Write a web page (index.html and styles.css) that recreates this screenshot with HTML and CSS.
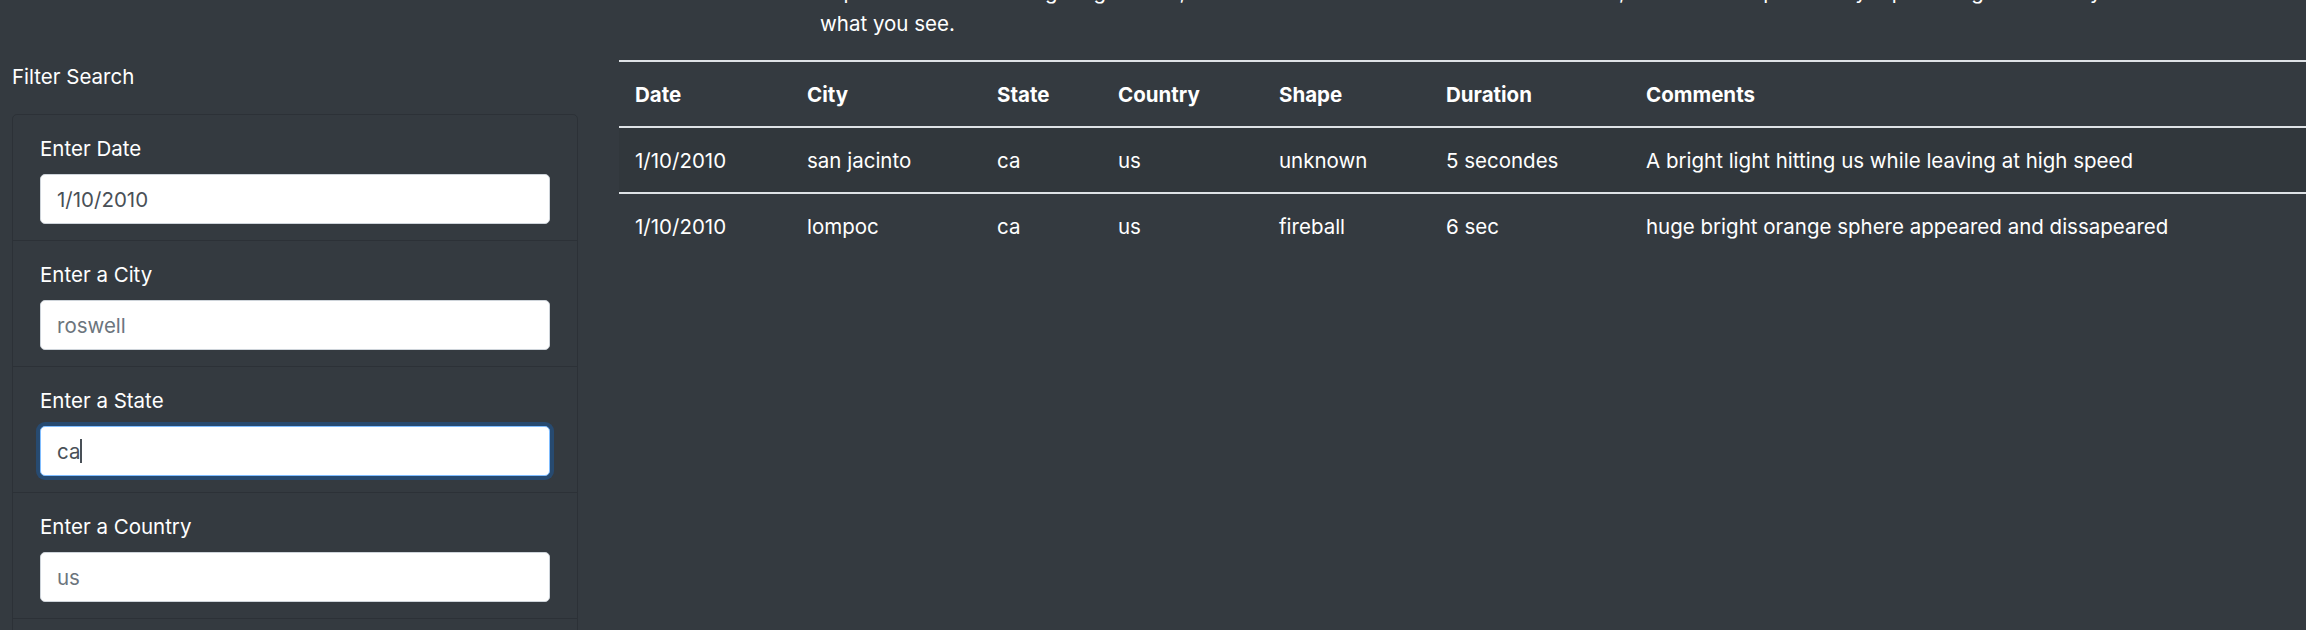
FILE: index.html
```html
<!DOCTYPE html>
<html lang="en">
<head>
<meta charset="utf-8">
<title>UFO Sightings</title>
<link rel="stylesheet" href="styles.css">
</head>
<body>
<div class="page">
  <aside class="sidebar">
    <div class="filter-title">Filter Search</div>
    <ul class="filter-card">
      <li class="filter-item">
        <label class="filter-label" for="datetime">Enter Date</label>
        <div class="input-wrap"><input class="filter-input" id="datetime" type="text" value="1/10/2010" placeholder="1/10/2010"></div>
      </li>
      <li class="filter-item">
        <label class="filter-label" for="city">Enter a City</label>
        <div class="input-wrap"><input class="filter-input" id="city" type="text" placeholder="roswell"></div>
      </li>
      <li class="filter-item">
        <label class="filter-label" for="state">Enter a State</label>
        <div class="input-wrap"><input class="filter-input is-focused" id="state" type="text" value="ca" placeholder="ca"><span class="caret">ca</span></div>
      </li>
      <li class="filter-item">
        <label class="filter-label" for="country">Enter a Country</label>
        <div class="input-wrap"><input class="filter-input" id="country" type="text" placeholder="us"></div>
      </li>
      <li class="filter-item filter-item-more"></li>
    </ul>
  </aside>
  <main class="content">
    <p class="intro">Explore the collected sightings below, narrow them down with the filters on the left, and then compare every reported light in the sky with<br>what you see.</p>
    <table class="sightings">
      <colgroup>
        <col class="c-date"><col class="c-city"><col class="c-state"><col class="c-country"><col class="c-shape"><col class="c-duration"><col class="c-comments">
      </colgroup>
      <thead>
        <tr><th>Date</th><th>City</th><th>State</th><th>Country</th><th>Shape</th><th>Duration</th><th>Comments</th></tr>
      </thead>
      <tbody>
        <tr><td>1/10/2010</td><td>san jacinto</td><td>ca</td><td>us</td><td>unknown</td><td>5 secondes</td><td>A bright light hitting us while leaving at high speed</td></tr>
        <tr><td>1/10/2010</td><td>lompoc</td><td>ca</td><td>us</td><td>fireball</td><td>6 sec</td><td>huge bright orange sphere appeared and dissapeared</td></tr>
      </tbody>
    </table>
  </main>
</div>
</body>
</html>
```

FILE: styles.css
```css
* { box-sizing: border-box; }

html, body {
  margin: 0;
  height: 100%;
  overflow: hidden;
}

body {
  background: #343a40;
  color: #fff;
  font-family: Inter, "Liberation Sans", Arial, sans-serif;
  font-size: 20.5px;
  line-height: 32px;
}

.page {
  display: flex;
  align-items: flex-start;
}

.sidebar {
  width: 566px;
  margin-left: 12px;
  flex: none;
  padding-top: 61px;
}

.filter-title {
  height: 32px;
  line-height: 32px;
}

.filter-card {
  list-style: none;
  margin: 21px 0 0 0;
  padding: 0;
  border: 1px solid rgba(0, 0, 0, 0.14);
  border-radius: 5px;
}

.filter-item {
  padding: 17px 27px 16px 27px;
  border-top: 1px solid rgba(0, 0, 0, 0.14);
}

.filter-item:first-child {
  border-top: none;
}

.filter-item-more {
  height: 125px;
}

.filter-label {
  display: block;
  height: 32px;
  line-height: 33px;
  margin-bottom: 10px;
}

.input-wrap {
  position: relative;
}

.filter-input {
  display: block;
  width: 100%;
  height: 50px;
  padding: 0 16px;
  font-family: inherit;
  font-size: 20.5px;
  color: #495057;
  background: #fff;
  border: 1px solid #ced4da;
  border-radius: 5px;
  outline: none;
}

.filter-input::placeholder {
  color: #6c757d;
  opacity: 1;
}

.filter-input.is-focused {
  border-color: #80bdff;
  box-shadow: 0 0 0 4px rgba(0, 123, 255, 0.25);
}

.caret {
  position: absolute;
  left: 17px;
  top: 13px;
  height: 24px;
  line-height: 24px;
  font-size: 20.5px;
  color: transparent;
  border-right: 2px solid #495057;
  pointer-events: none;
}

.content {
  flex: 1;
  margin-left: 41px;
  margin-top: -24px;
  min-width: 0;
}

.intro {
  margin: 0 0 20px 0;
  padding-left: 201px;
  white-space: nowrap;
  overflow: hidden;
}

.sightings {
  width: 1687px;
  table-layout: fixed;
  border-collapse: collapse;
  color: #fff;
}

.c-date { width: 172px; }
.c-city { width: 190px; }
.c-state { width: 121px; }
.c-country { width: 161px; }
.c-shape { width: 167px; }
.c-duration { width: 200px; }

.sightings th,
.sightings td {
  text-align: left;
  padding: 17px 16px 15px 16px;
  line-height: 32px;
  border-top: 2px solid #dee2e6;
  white-space: nowrap;
}

.sightings th {
  font-weight: 700;
}

.sightings tbody tr:nth-child(odd) {
  background: rgba(0, 0, 0, 0.05);
}
```
